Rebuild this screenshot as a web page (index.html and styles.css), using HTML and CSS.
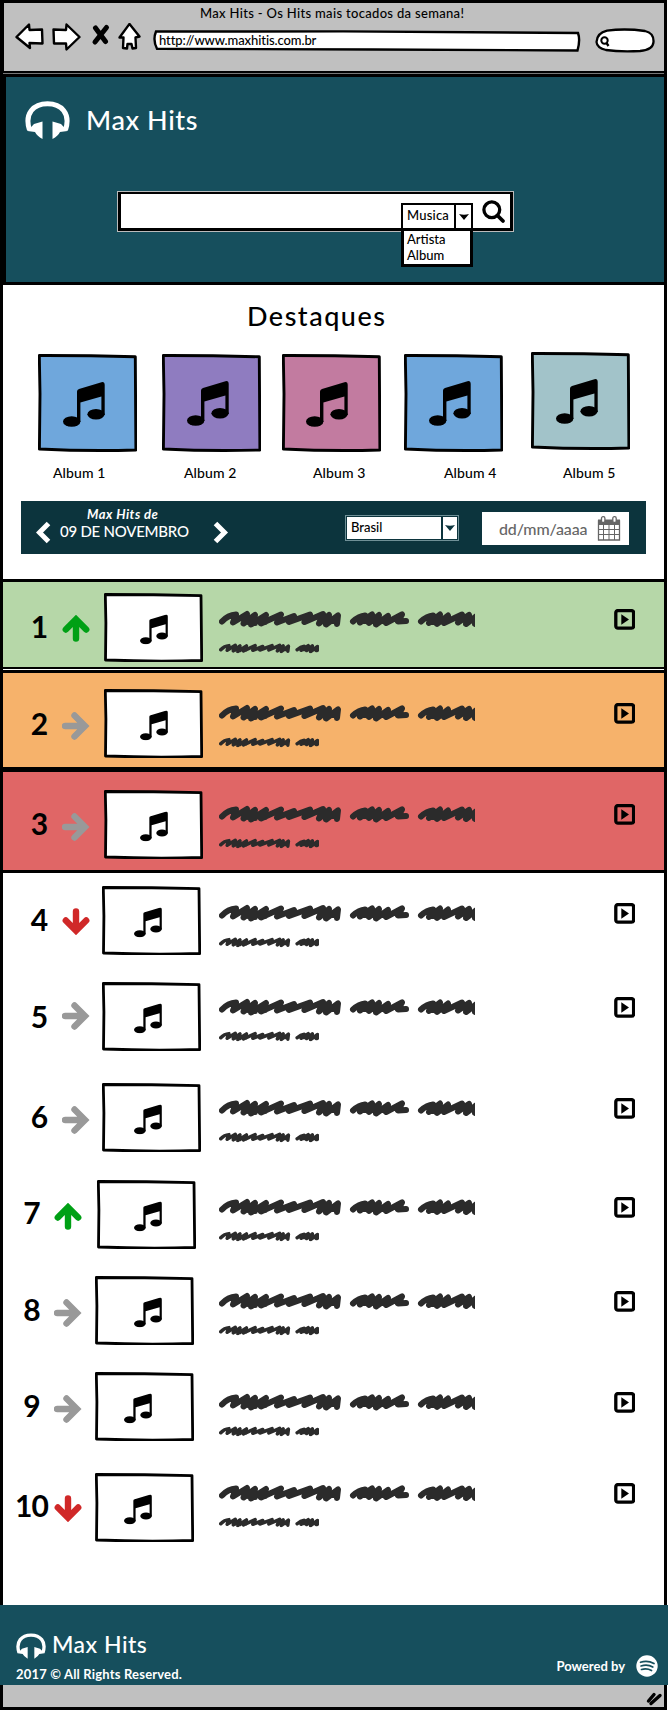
FILE: index.html
```html
<!DOCTYPE html>
<html lang="pt-BR">
<head>
<meta charset="utf-8">
<title>Max Hits - Os Hits mais tocados da semana!</title>
<link rel="stylesheet" href="styles.css">
</head>
<body>
<svg class="sprite" width="0" height="0">
  <symbol id="note" viewBox="0 0 42 45">
    <ellipse cx="8.700" cy="39.500" rx="8.700" ry="5.300"/><ellipse cx="33" cy="32.300" rx="8.600" ry="5.300"/>
    <path d="M14 9.500Q14 7.500 16 7L38.500 .2Q41.700-.4 41.700 3V33H38.400V14.500L17.400 20.500V40H14Z"/>
  </symbol>
  <symbol id="up" viewBox="0 0 28 27"><path d="M14 23.500V6M3.800 14.500L14 4.300L24.200 14.500" fill="none" stroke="currentColor" stroke-width="6.400" stroke-linecap="round"/></symbol>
  <symbol id="down" viewBox="0 0 28 27"><path d="M14 3.500V21M3.800 12.500L14 22.700L24.200 12.500" fill="none" stroke="currentColor" stroke-width="6.400" stroke-linecap="round"/></symbol>
  <symbol id="right" viewBox="0 0 28 28"><path d="M3 14H21M12.500 3.500L23 14L12.500 24.500" fill="none" stroke="currentColor" stroke-width="6.400" stroke-linecap="round"/></symbol>
  <symbol id="frame" viewBox="0 0 99 69"><path d="M1.300 1.500Q50 1.600 97 2.600L97.700 67.500Q50 68.800 1.500 67L1.900 30Z" fill="#fff" stroke="#000" stroke-width="2.800" stroke-linejoin="round"/></symbol>
  <symbol id="cover" viewBox="0 0 99 98"><path d="M1.300 1.500Q50 1.400 97.300 2.800L97.900 96Q50 97.400 1.400 95L2 40Z" fill="currentColor" stroke="#000" stroke-width="2.900" stroke-linejoin="round"/></symbol>
  <symbol id="scribble" viewBox="0 0 256 18" preserveAspectRatio="xMinYMid slice">
    <path d="M3 11.500Q9 5 17 4.500L14 12.500L28 4L24.500 13.500L36 5L32 14.500L47 5L42 13.500L62 4.500L58 12.500L75 6L70 12L91 4.500L85.500 12L104 4L100 13.500L110 5L107 14.500L119 5.500L118 14M29 12L36 13M38 10L46 12M104 11L117 11M134 11.500Q140 6 146 5.500L141 12.500L153 4.500L150 13L160 5L157 14.500L169 6L167 13L183 4.500L179 11.500L187 11M145 11L166 11M202 11.500Q208 6 214 5.500L210 13L221 4.500L218 14L229 5.500L225 13L243 4.500L239 12.500L250 5L247 14L259 5L256 14M214 12L229 11" fill="none" stroke="#2b2b2b" stroke-width="6" stroke-linecap="round" stroke-linejoin="round"/>
  </symbol>
  <symbol id="play" viewBox="0 0 21 21"><rect x="1.800" y="1.600" width="17.800" height="17.600" rx="2.200" fill="none" stroke="#000" stroke-width="3.300"/><path d="M7.300 5.200L15 10.400L7.300 15.700Z"/></symbol>
  <symbol id="phones" viewBox="0 0 45 38">
    <path d="M4.500 29C-1 12 9 2.700 22.500 2.700S46 12 40.500 29" fill="none" stroke="currentColor" stroke-width="5"/>
    <path d="M2.500 30L9 23L17.500 20.500V38Q12 35 10 31ZM42.500 30L36 23L27.500 20.500V38Q33 35 35 31Z" fill="currentColor"/>
  </symbol>
</svg>

<header class="chrome">
  <div class="chrome-title">Max Hits - Os Hits mais tocados da semana!</div>
  <div class="toolbar">
    <svg class="nav" width="126" height="28" viewBox="0 0 126 28" fill="#fff" stroke="#000" stroke-width="2.400" stroke-linejoin="round">
      <path d="M1.500 14L14 1.500L14.500 7L27 6.500L27.500 20.500L14.500 20L15 25Z"/>
      <path d="M38.500 6.500L51 7L51.500 1.500L64.500 14L51.500 26.500L51 20.500L39 20.500Z"/>
      <path d="M80.500 5L90.500 18.500M91.500 4.500L80 19" stroke-width="5" stroke-linecap="round"/>
      <path d="M114.500 .9L124.500 13.500L120.500 14.500L121 25L117.500 25.500L116.500 21H112.500L112 25.500L108 25L108.500 14.500H104.500Z"/>
    </svg>
    <div class="address"><svg class="address-box" width="428" height="22" viewBox="0 0 428 22"><path d="M3 1.500L190 1.400L425 3Q427.500 10 424.500 20.500L220 19.500L4 18.800Q-.5 10 3 1.500Z" fill="#fff" stroke="#000" stroke-width="2.400"/></svg><span class="address-text">http://www.maxhitis.com.br</span></div>
    <svg class="quick-search" width="60" height="25" viewBox="0 0 60 25"><path d="M1.500 14Q2 5 12 2.700Q30 .2 50 3Q59 5 58.500 14Q58 22 45 23Q25 24 11 22Q2 20 1.500 14Z" fill="#fff" stroke="#000" stroke-width="2.300"/><circle cx="9.500" cy="12.500" r="3.200" fill="none" stroke="#000" stroke-width="2"/><path d="M11.500 15L13.500 18" stroke="#000" stroke-width="2.300"/></svg>
  </div>
</header>

<main class="page">
  <section class="hero">
    <div class="brand"><svg width="45" height="38"><use href="#phones"/></svg><h1 class="brand-name">Max Hits</h1></div>
    <div class="search">
      <div class="search-type">
        <span class="search-type-value">Musica</span>
        <span class="search-type-arrow"><svg width="10" height="6"><path d="M0 0Q5 1.500 10 0L5 6Z"/></svg></span>
        <div class="menu"><div>Artista</div><div>Album</div></div>
      </div>
      <svg class="search-icon" width="24" height="24" viewBox="0 0 24 24"><circle cx="9.800" cy="9.800" r="7.900" fill="none" stroke="#000" stroke-width="3.300"/><path d="M15.500 15.500L21 21" stroke="#000" stroke-width="3.800" stroke-linecap="round"/></svg>
    </div>
  </section>

  <section class="featured">
    <h2 class="featured-title">Destaques</h2>
    <div class="albums">
      <figure class="album album-1"><svg width="99" height="98"><use href="#cover"/><use href="#note" x="25" y="28" width="42" height="45" fill="#000"/></svg><figcaption>Album 1</figcaption></figure>
      <figure class="album album-2"><svg width="99" height="98"><use href="#cover"/><use href="#note" x="25" y="27" width="42" height="45" fill="#000"/></svg><figcaption>Album 2</figcaption></figure>
      <figure class="album album-3"><svg width="99" height="98"><use href="#cover"/><use href="#note" x="24" y="28" width="42" height="45" fill="#000"/></svg><figcaption>Album 3</figcaption></figure>
      <figure class="album album-4"><svg width="99" height="98"><use href="#cover"/><use href="#note" x="25" y="27" width="42" height="45" fill="#000"/></svg><figcaption>Album 4</figcaption></figure>
      <figure class="album album-5"><svg width="99" height="98"><use href="#cover"/><use href="#note" x="25" y="27" width="42" height="45" fill="#000"/></svg><figcaption>Album 5</figcaption></figure>
    </div>
  </section>

  <section class="filters">
    <svg class="chevron" width="16" height="24" viewBox="0 0 16 24"><path d="M12.500 2.500L3.500 11.500L12.500 20.500" fill="none" stroke="#fff" stroke-width="5"/></svg>
    <div class="period"><span class="period-label">Max Hits de</span><span class="period-date">09 DE NOVEMBRO</span></div>
    <svg class="chevron" width="16" height="24" viewBox="0 0 16 24"><path d="M2.500 2.500L11.500 11.500L2.500 20.500" fill="none" stroke="#fff" stroke-width="5"/></svg>
    <div class="country"><span class="country-value">Brasil</span><span class="country-arrow"><svg width="10" height="6"><path d="M0 0Q5 1.500 10 0L5 6Z" fill="#0c343d"/></svg></span></div>
    <div class="date"><span class="date-text">dd/mm/aaaa</span>
      <svg width="24" height="26" viewBox="0 0 24 26" fill="none" stroke="#666"><path d="M1.500 5H22.500V24H1.500Z" stroke-width="1.300"/><path d="M1 3.500H23V9H1Z" fill="#666" stroke="none"/><path d="M2 13.500H22M2 18.500H22M6.500 9V24M12 9V24M17.500 9V24" stroke-width="1"/><rect x="4.500" y=".7" width="3.400" height="5.800" rx="1.500" fill="#fff" stroke-width="1.300"/><rect x="15.800" y=".7" width="3.400" height="5.800" rx="1.500" fill="#fff" stroke-width="1.300"/></svg>
    </div>
  </section>

  <section class="chart">
    <article class="row row-1"><span class="rank">1</span><svg class="move up" width="28" height="27"><use href="#up"/></svg><svg class="thumb" width="99" height="69"><use href="#frame"/><use href="#note" x="36" y="21.500" width="28" height="30"/></svg><div class="song"><svg class="title" width="256" height="18"><use href="#scribble"/></svg><svg class="artist" width="100" height="11"><use href="#scribble" width="149" height="10.500"/></svg></div><svg class="play" width="21" height="21"><use href="#play"/></svg></article>
    <article class="row row-2"><span class="rank">2</span><svg class="move same" width="28" height="28"><use href="#right"/></svg><svg class="thumb" width="99" height="69"><use href="#frame"/><use href="#note" x="36" y="21.500" width="28" height="30"/></svg><div class="song"><svg class="title" width="256" height="18"><use href="#scribble"/></svg><svg class="artist" width="100" height="11"><use href="#scribble" width="149" height="10.500"/></svg></div><svg class="play" width="21" height="21"><use href="#play"/></svg></article>
    <article class="row row-3"><span class="rank">3</span><svg class="move same" width="28" height="28"><use href="#right"/></svg><svg class="thumb" width="99" height="69"><use href="#frame"/><use href="#note" x="36" y="21.500" width="28" height="30"/></svg><div class="song"><svg class="title" width="256" height="18"><use href="#scribble"/></svg><svg class="artist" width="100" height="11"><use href="#scribble" width="149" height="10.500"/></svg></div><svg class="play" width="21" height="21"><use href="#play"/></svg></article>
    <article class="row row-4"><span class="rank">4</span><svg class="move down" width="28" height="27"><use href="#down"/></svg><svg class="thumb" width="99" height="69"><use href="#frame"/><use href="#note" x="32" y="21.500" width="28" height="30"/></svg><div class="song"><svg class="title" width="256" height="18"><use href="#scribble"/></svg><svg class="artist" width="100" height="11"><use href="#scribble" width="149" height="10.500"/></svg></div><svg class="play" width="21" height="21"><use href="#play"/></svg></article>
    <article class="row row-5"><span class="rank">5</span><svg class="move same" width="28" height="28"><use href="#right"/></svg><svg class="thumb" width="99" height="69"><use href="#frame"/><use href="#note" x="32" y="21.500" width="28" height="30"/></svg><div class="song"><svg class="title" width="256" height="18"><use href="#scribble"/></svg><svg class="artist" width="100" height="11"><use href="#scribble" width="149" height="10.500"/></svg></div><svg class="play" width="21" height="21"><use href="#play"/></svg></article>
    <article class="row row-6"><span class="rank">6</span><svg class="move same" width="28" height="28"><use href="#right"/></svg><svg class="thumb" width="99" height="69"><use href="#frame"/><use href="#note" x="32" y="21.500" width="28" height="30"/></svg><div class="song"><svg class="title" width="256" height="18"><use href="#scribble"/></svg><svg class="artist" width="100" height="11"><use href="#scribble" width="149" height="10.500"/></svg></div><svg class="play" width="21" height="21"><use href="#play"/></svg></article>
    <article class="row narrow row-7"><span class="rank">7</span><svg class="move up" width="28" height="27"><use href="#up"/></svg><svg class="thumb" width="99" height="69"><use href="#frame"/><use href="#note" x="37" y="21.500" width="28" height="30"/></svg><div class="song"><svg class="title" width="256" height="18"><use href="#scribble"/></svg><svg class="artist" width="100" height="11"><use href="#scribble" width="149" height="10.500"/></svg></div><svg class="play" width="21" height="21"><use href="#play"/></svg></article>
    <article class="row narrow row-8"><span class="rank">8</span><svg class="move same" width="28" height="28"><use href="#right"/></svg><svg class="thumb" width="99" height="69"><use href="#frame"/><use href="#note" x="39" y="21.500" width="28" height="30"/></svg><div class="song"><svg class="title" width="256" height="18"><use href="#scribble"/></svg><svg class="artist" width="100" height="11"><use href="#scribble" width="149" height="10.500"/></svg></div><svg class="play" width="21" height="21"><use href="#play"/></svg></article>
    <article class="row narrow row-9"><span class="rank">9</span><svg class="move same" width="28" height="28"><use href="#right"/></svg><svg class="thumb" width="99" height="69"><use href="#frame"/><use href="#note" x="29" y="21.500" width="28" height="30"/></svg><div class="song"><svg class="title" width="256" height="18"><use href="#scribble"/></svg><svg class="artist" width="100" height="11"><use href="#scribble" width="149" height="10.500"/></svg></div><svg class="play" width="21" height="21"><use href="#play"/></svg></article>
    <article class="row narrow row-10"><span class="rank">10</span><svg class="move down" width="28" height="27"><use href="#down"/></svg><svg class="thumb" width="99" height="69"><use href="#frame"/><use href="#note" x="29" y="21.500" width="28" height="30"/></svg><div class="song"><svg class="title" width="256" height="18"><use href="#scribble"/></svg><svg class="artist" width="100" height="11"><use href="#scribble" width="149" height="10.500"/></svg></div><svg class="play" width="21" height="21"><use href="#play"/></svg></article>
  </section>
</main>

<footer class="footer">
  <div>
    <div class="footer-brand"><svg width="30" height="26"><use href="#phones"/></svg><span class="footer-name">Max Hits</span></div>
    <div class="rights">2017 © All Rights Reserved.</div>
  </div>
  <div class="powered"><span class="powered-text">Powered by</span><svg width="22" height="22" viewBox="0 0 22 22"><circle cx="11" cy="11" r="10.700" fill="#fff"/><path d="M4.500 7.300Q11.500 5 18 8.500M5 11Q11.500 9 16.800 12M5.500 14.500Q11 13 15.500 15.500" fill="none" stroke="#164f5d" stroke-width="1.700" stroke-linecap="round"/></svg></div>
</footer>
<div class="status"><svg width="17" height="14" viewBox="0 0 17 14"><path d="M2.500 9L8 2.500M5 11.500L14 3.500" stroke="#000" stroke-width="3.400" stroke-linecap="round"/></svg></div>
</body>
</html>
```

FILE: styles.css
```css
* { box-sizing: border-box; }
body { margin: 0; width: 668px; height: 1711px; background: #fff; color: #000; font-family: Lato, "Open Sans", sans-serif; font-weight: 500; overflow: hidden; }
svg { display: block; flex: none; }
.sprite { position: absolute; }
h1, h2, figure { margin: 0; font-weight: 500; }

.chrome { width: 667px; height: 74px; background: #c0c0c0; border: 3px solid #000; border-left-width: 4px; }
.chrome-title { margin-top: 1px; padding-left: 196px; height: 20px; line-height: 19px; font-size: 13px; letter-spacing: .32px; white-space: nowrap; }
.toolbar { display: flex; align-items: flex-start; padding-left: 11px; }
.nav { margin: -1px 12px 0 0; }
.address { display: grid; width: 428px; margin: 6px 14px 0 0; }
.address-box, .address-text { grid-area: 1 / 1; }
.address-text { padding-left: 6px; line-height: 20px; font-size: 13px; letter-spacing: -.1px; font-variant-ligatures: none; }
.quick-search { margin-top: 4px; }

.page { width: 667px; height: 1531px; border: solid #000; border-width: 0 3px; }
.hero { height: 211px; padding: 24px 0 0 19px; background: #164f5d; border: solid #000; border-width: 3px 0 3px 3px; box-shadow: 0 -1px 0 #777; }
.brand { display: flex; height: 38px; gap: 16px; color: #fff; }
.brand-name { font-size: 27px; line-height: 38px; letter-spacing: .6px; }
.search { position: relative; display: flex; width: 395px; height: 39px; margin: 53px 0 0 93px; background: #fff; border: 3px solid #000; border-top-width: 2.500px; outline: .5px solid #bbb; }
.search-type { position: relative; display: flex; width: 72px; height: 27px; margin: 9px 9px 0 280px; border: 2px solid #000; font-size: 13px; }
.search-type-value { width: 53px; padding-left: 4px; line-height: 21px; letter-spacing: .2px; border-right: 2px solid #000; }
.search-type-arrow { flex: 1; display: grid; place-items: center; }
.menu { position: absolute; left: -2px; top: 23px; width: 72px; height: 39px; padding: 0 0 0 3px; background: #fff; border: 3px solid #000; line-height: 16px; }
.search-icon { margin-top: 6px; }

.featured { height: 216px; }
.featured-title { height: 69px; padding: 12px 0 0 244px; font-size: 27px; line-height: 38px; letter-spacing: 1.500px; }
.albums { display: flex; padding-left: 35px; }
.album { width: 99px; font-size: 14px; white-space: nowrap; }
.album figcaption { height: 20px; margin-top: 11px; line-height: 20px; color: #000; letter-spacing: .1px; }
.album-1 { color: #6fa7dc; margin-right: 25px; }
.album-2 { color: #8f7cc0; margin-right: 21px; }
.album-3 { color: #c27ba0; margin-right: 23px; }
.album-4 { color: #6fa7dc; margin-right: 28px; }
.album-5 { color: #a2c3c9; margin-top: -2px; }
.album-1 figcaption { padding-left: 15px; }
.album-2 figcaption { padding-left: 22px; }
.album-3 figcaption { padding-left: 31px; }
.album-4 figcaption { padding-left: 40px; }
.album-5 figcaption { padding-left: 32px; margin-top: 13px; }

.filters { display: flex; width: 625px; height: 53px; margin: 0 0 25px 18px; padding-left: 15px; background: #0c343d; color: #fff; }
.chevron { margin-top: 20px; }
.period { width: 161px; padding: 5px 0 0 8px; display: flex; flex-direction: column; }
.period-label { padding-left: 27px; font-size: 13px; font-style: italic; font-weight: 700; line-height: 17px; letter-spacing: .5px; }
.period-date { font-size: 15px; line-height: 17px; letter-spacing: -.25px; white-space: nowrap; }
.country { display: flex; width: 112px; height: 24px; margin: 15px 24px 0 117px; background: #fff; color: #000; border: 1px solid #0c343d; outline: 1px solid #6f9097; }
.country-value { width: 96px; padding-left: 4px; font-size: 13px; line-height: 20px; border-right: 2.500px solid #0c343d; }
.country-arrow { flex: 1; display: grid; place-items: center; }
.date { display: flex; align-items: center; width: 147px; height: 33px; margin-top: 11px; padding-left: 17px; background: #fff; color: #666; }
.date-text { width: 98px; font-size: 16px; letter-spacing: -.15px; }

.row { display: grid; grid-template-columns: 59px 28px 129px 395px 21px; align-items: start; height: var(--h); --box-x: 12px; }
.row.narrow { grid-template-columns: 51px 28px 137px 395px 21px; --box-x: 13px; }
.rank { height: 40px; margin-top: calc(var(--rank) - 21px); padding-left: 13px; text-align: center; line-height: 40px; font-size: 30px; font-weight: 700; letter-spacing: -1px; }
.narrow .rank { padding-left: 6px; }
.move { margin-top: calc(var(--move) - 14px); }
.up { color: #00a015; }
.down { color: #d02828; }
.same { color: #999; }
.thumb { margin: var(--box) 0 0 var(--box-x); }
.song { margin-top: calc(var(--song) - 1px); }
.artist { margin-top: 15px; }
.play { margin-top: calc(var(--song) - 2px); }

.row-1 { --h: 90px; --box: 14px; --box-x: 14px; --song: 32px; --move: 50px; --rank: 48px; margin-bottom: 1px; background: #b6d7a8; box-shadow: inset 0 3px #000, inset 0 -2px #000; }
.row-2 { --h: 99px; --box: 19px; --box-x: 14px; --song: 35px; --move: 56px; --rank: 54px; background: #f6b26b; box-shadow: inset 0 3px #000, inset 0 -2px #000; }
.row-3 { --h: 104px; --box: 21px; --box-x: 14px; --song: 37px; --move: 58px; --rank: 55px; background: #e06666; box-shadow: inset 0 3px #000, inset 0 -3px #000; }
.row-4 { --h: 96px; --box: 13px; --song: 32px; --move: 49px; --rank: 47px; }
.row-5 { --h: 100px; --box: 13px; --song: 30px; --move: 47px; --rank: 48px; }
.row-6 { --h: 97px; --box: 14px; --song: 31px; --move: 51px; --rank: 48px; }
.row-7 { --h: 96px; --box: 14px; --song: 33px; --move: 51px; --rank: 47px; }
.row.row-7 { --box-x: 15px; }
.row-8 { --h: 96px; --box: 14px; --song: 31px; --move: 51px; --rank: 48px; }
.row-9 { --h: 101px; --box: 14px; --song: 36px; --move: 51px; --rank: 48px; }
.row-10 { --h: 146px; --box: 14px; --song: 26px; --move: 50px; --rank: 47px; }

.footer { display: flex; justify-content: space-between; height: 80px; padding: 28px 10px 0 16px; background: #164f5d; color: #fff; }
.footer-brand { display: flex; height: 26px; gap: 6px; }
.footer-name { font-size: 23px; line-height: 26px; letter-spacing: .5px; margin-top: -2px; }
.rights { margin-top: 5px; font-size: 13px; font-weight: 700; line-height: 20px; letter-spacing: .18px; }
.powered { display: flex; align-items: center; gap: 11px; height: 22px; margin-top: 22px; }
.powered-text { font-size: 13px; font-weight: 700; }
.status { display: flex; justify-content: flex-end; width: 667px; height: 25px; padding: 7px 1px 0 0; background: #c0c0c0; border: solid #000; border-width: 0 3px 3px; }
```
